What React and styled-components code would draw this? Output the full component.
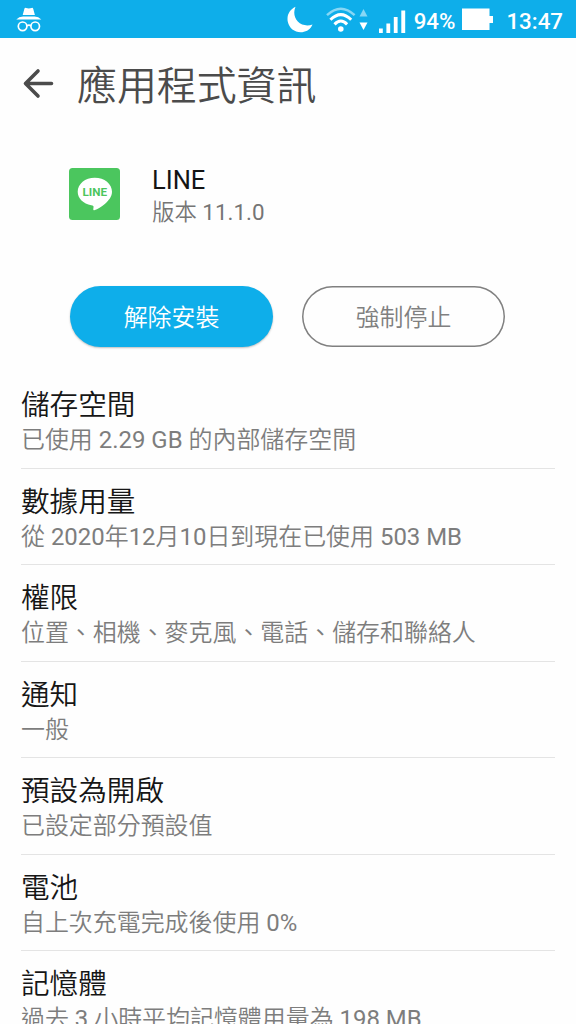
import React from "react";
import styled, { createGlobalStyle } from "styled-components";

const Global = createGlobalStyle`
  * { box-sizing: border-box; }
  html, body { margin: 0; background: #fefefe; }
  body { font-family: Roboto, "Noto Sans CJK TC", sans-serif; height: 1024px; overflow: hidden; }
`;

const Screen = styled.main`
  width: 576px;
  height: 1024px;
  overflow: hidden;
  background: #fefefe;
`;

const StatusBar = styled.header`
  display: flex;
  align-items: center;
  height: 38px;
  padding: 0 13px 0 16px;
  background: #0eaeea;
  color: #fff;
`;

const Spacer = styled.div`
  flex: 1;
`;

const Glyph = styled.svg`
  display: block;
  flex: none;
  margin-left: ${(p) => p.$gap || 0}px;
`;

const StatusText = styled.span`
  margin-left: ${(p) => p.$gap}px;
  padding-top: 3px;
  font-size: ${(p) => p.$size}px;
  line-height: 30px;
  font-weight: 500;
  white-space: nowrap;
`;

const TitleBar = styled.div`
  display: flex;
  align-items: center;
  height: 90px;
  padding-left: 22px;
`;

const Title = styled.h1`
  margin: 7px 0 0 23px;
  font-size: 39.9px;
  line-height: 56px;
  font-weight: 350;
  color: #4b4b4b;
`;

const AppInfo = styled.section`
  display: flex;
  gap: 32px;
  padding: 36px 0 0 69px;
  height: 158px;
`;

const AppIcon = styled.svg`
  display: block;
  margin-top: 4px;
`;

const AppName = styled.div`
  font-size: 25.5px;
  line-height: 32px;
  color: #141414;
`;

const AppVersion = styled.div`
  font-size: 22.4px;
  line-height: 32px;
  font-weight: 350;
  color: #757575;
`;

const Latin = styled.span`
  font-weight: 400;
`;

const Actions = styled.div`
  display: flex;
  gap: 29px;
  padding-left: 70px;
`;

const Button = styled.button`
  width: 203px;
  height: 61px;
  padding: 0 0 2px;
  border-radius: 31px;
  border: 0;
  background: ${(p) => (p.$filled ? "#0eaeea" : "#fefefe")};
  color: ${(p) => (p.$filled ? "#fff" : "#808080")};
  box-shadow: ${(p) => (p.$filled ? "0 1px 2px rgba(0, 0, 0, 0.25)" : "inset 0 0 0 1.5px #808080")};
  font-family: inherit;
  font-size: 23.9px;
  font-weight: 350;
`;

const List = styled.ul`
  list-style: none;
  margin: 0;
  padding: 25px 21px 0;
`;

const Row = styled.li`
  height: 96.5px;
  padding-top: 13px;
  border-bottom: 1px solid #e4e4e4;
  white-space: nowrap;
`;

const RowTitle = styled.div`
  font-size: 28.6px;
  line-height: 40px;
  font-weight: 350;
  color: #161616;
`;

const RowSummary = styled.div`
  margin-top: -1px;
  font-size: 23.95px;
  line-height: 32px;
  font-weight: 350;
  color: #7d7d7d;
`;

const rows = [
  ["儲存空間", "已使用 2.29 GB 的內部儲存空間"],
  ["數據用量", "從 2020年12月10日到現在已使用 503 MB"],
  ["權限", "位置、相機、麥克風、電話、儲存和聯絡人"],
  ["通知", "一般"],
  ["預設為開啟", "已設定部分預設值"],
  ["電池", "自上次充電完成後使用 0%"],
  ["記憶體", "過去 3 小時平均記憶體用量為 198 MB"],
];

// Latin runs use a slightly heavier weight than the Chinese text around them.
function Mixed({ children }) {
  return children
    .split(/([\x20-\x7e]+)/)
    .map((part, i) => (i % 2 ? <Latin key={i}>{part}</Latin> : part));
}

function Incognito() {
  return (
    <Glyph width="26" height="26" viewBox="0 0 26 26">
      <path d="M6.700 9 8.400 2.800Q8.800 1.500 10 1.900L12.800 2.500 15.600 1.900Q16.800 1.500 17.200 2.800L18.900 9Z" fill="#fff" />
      <path d="M.3 13.400Q3 10.800 7 10.500H18.600Q22.600 10.800 25.300 13.400Z" fill="#fff" />
      <g fill="none" stroke="#fff" strokeWidth="1.700">
        <circle cx="6.600" cy="20.300" r="4.300" />
        <circle cx="19.200" cy="20.300" r="4.300" />
        <path d="M10.700 19.800Q12.900 18.500 15.100 19.800" />
      </g>
    </Glyph>
  );
}

function Moon() {
  return (
    <Glyph width="26" height="27" viewBox="0 0 26 27">
      <path d="M8.500.8C2.500 3.600-.5 9.500.8 15.800 2.300 22.800 8.500 27 15.300 26.200 20 25.600 23.800 22.800 25.500 18.500 20.500 20.400 14.500 19.500 10.800 15.600 7 11.600 6.300 5.800 8.500.8Z" fill="#fff" />
    </Glyph>
  );
}

function Wifi() {
  return (
    <Glyph $gap={13} width="43" height="26" viewBox="0 0 43 26">
      <g fill="none" stroke="#fff">
        <path d="M1 9.200Q14.800-3.600 28.600 9.200" strokeWidth="2.500" opacity=".5" />
        <path d="M4.400 13.700Q14.800 3.400 25.200 13.700" strokeWidth="3" />
        <path d="M8.500 18.400Q14.800 11.800 21.100 18.400" strokeWidth="3" />
      </g>
      <circle cx="14.800" cy="23" r="2.800" fill="#fff" />
      <path d="M33.500 10.500 37.500 3 41.500 10.500Z" fill="#fff" opacity=".5" />
      <path d="M33.500 16.500H41.500L37.500 24Z" fill="#fff" />
    </Glyph>
  );
}

function Signal() {
  return (
    <Glyph $gap={10} width="27" height="28" viewBox="0 0 27 28">
      <path d="M0 23.500h3.800V28H0zM7.400 18.500h3.800V28H7.400zM14.800 12h3.800v16h-3.800zM22.300 5.500h3.900V28h-3.900z" fill="#fff" />
    </Glyph>
  );
}

function Battery() {
  return (
    <Glyph $gap={7} width="32" height="22" viewBox="0 0 32 22">
      <path d="M0 0H27.500V7.500H31V14.500H27.500V22H0Z" fill="#fff" transform="translate(0 .5)" />
    </Glyph>
  );
}

function LineIcon() {
  return (
    <AppIcon width="51" height="52" viewBox="0 0 51 52">
      <rect width="51" height="52" rx="3.500" fill="#4bc65e" />
      <path d="M25.800 9.700C35.500 9.700 43 15.900 43 23.700 43 28.500 39.800 32.500 35.800 35.900 32.500 38.800 28.800 41.100 25.300 42.200 23.900 42.600 24.300 41.200 24.500 39.600 24.800 37.800 24.300 37.600 22.200 37.200 14.300 35.600 8.700 30.500 8.700 23.700 8.700 15.900 16.100 9.700 25.800 9.700Z" fill="#fff" />
      <text x="13.500" y="27.900" textLength="24.500" lengthAdjust="spacingAndGlyphs" fontSize="11.500" fontWeight="700" fontFamily="Roboto, sans-serif" fill="#4bc65e">LINE</text>
    </AppIcon>
  );
}

export default function App() {
  return (
    <Screen>
      <Global />
      <StatusBar>
        <Incognito />
        <Spacer />
        <Moon />
        <Wifi />
        <Signal />
        <StatusText $gap={8} $size={22.3}>94%</StatusText>
        <Battery />
        <StatusText $gap={12} $size={22.3}>13:47</StatusText>
      </StatusBar>
      <TitleBar>
        <svg width="32" height="32" viewBox="0 0 32 32">
          <path d="M29.500 16.500H3.500M16 4 3.500 16.500 16 29" fill="none" stroke="#4b4b4b" strokeWidth="3.600" strokeLinecap="round" strokeLinejoin="round" />
        </svg>
        <Title>應用程式資訊</Title>
      </TitleBar>
      <AppInfo>
        <LineIcon />
        <div>
          <AppName>LINE</AppName>
          <AppVersion><Mixed>版本 11.1.0</Mixed></AppVersion>
        </div>
      </AppInfo>
      <Actions>
        <Button $filled>解除安裝</Button>
        <Button>強制停止</Button>
      </Actions>
      <List>
        {rows.map(([title, summary]) => (
          <Row key={title}>
            <RowTitle>{title}</RowTitle>
            <RowSummary><Mixed>{summary}</Mixed></RowSummary>
          </Row>
        ))}
      </List>
    </Screen>
  );
}
